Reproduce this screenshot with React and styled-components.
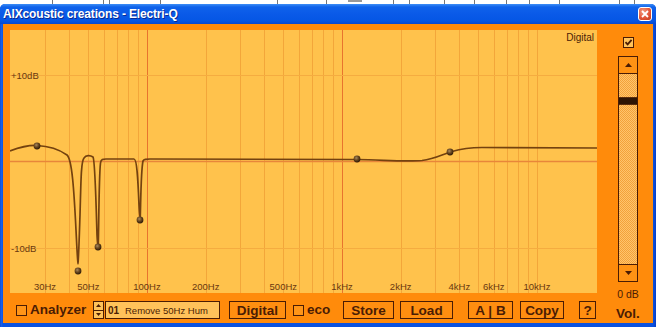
import React from 'react';
import styled, { createGlobalStyle } from 'styled-components';

const Global = createGlobalStyle`
  html, body { margin: 0; padding: 0; background: #fff; }
  body { font-family: "Liberation Sans", Arial, sans-serif; }
  * { box-sizing: border-box; }
`;

const INK = '#4a1c04';
const ORANGE = '#FF8B0B';

const Page = styled.div`
  width: 656px;
  height: 327px;
  overflow: hidden;
  background: #fff;
  display: flex;
  flex-direction: column;
`;

const BackStrip = styled.svg`
  display: block;
  width: 656px;
  height: 4px;
  flex: none;
`;

const Window = styled.div`
  flex: 1;
  display: flex;
  flex-direction: column;
  background: linear-gradient(90deg, #0840c8 0, #1a62ea 1px, #0a52e0 3px, #0a52e0 calc(100% - 3px), #0a3fc4 100%);
  border-radius: 5px 5px 0 0;
  overflow: hidden;
`;

const TitleBar = styled.div`
  height: 20px;
  flex: none;
  display: flex;
  align-items: center;
  justify-content: space-between;
  padding: 0 4px 0 3px;
  background: linear-gradient(180deg, #3d8ef6 0%, #0f62ea 15%, #0a5ae8 50%, #0556e4 85%, #0a48cf 100%);
`;

const Title = styled.span`
  color: #fff;
  font: bold 12px "Liberation Sans", Arial, sans-serif;
  letter-spacing: -0.15px;
  text-shadow: 1px 1px 0 #0a2a90;
`;

const CloseBtn = styled.div`
  width: 14px;
  height: 14px;
  border: 1px solid #fff;
  border-radius: 3px;
  background: radial-gradient(circle at 35% 30%, #f29a80 0%, #e2563a 55%, #c23818 100%);
  display: flex;
  align-items: center;
  justify-content: center;
`;

const Frame = styled.div`
  flex: 1;
  margin: 0 3px 4px 3px;
  background: ${ORANGE};
  display: grid;
  grid-template-columns: 587px 56px;
  padding-left: 7px;
`;

const MainCol = styled.div`
  display: flex;
  flex-direction: column;
  padding-top: 6px;
`;

const Graph = styled.svg`
  display: block;
  width: 587px;
  height: 263px;
  background: #FFC24C;
`;

const Toolbar = styled.div`
  margin-top: 8px;
  height: 18px;
  display: flex;
  align-items: center;
`;

const Box = styled.span`
  width: 11px;
  height: 11px;
  flex: none;
  border: 1px solid ${INK};
  background: ${p => (p.$checked ? '#FFC25A' : '#FF9518')};
  margin-left: ${p => p.$ml || 0}px;
  display: flex;
  align-items: center;
  justify-content: center;
`;

const ToolLabel = styled.span`
  font: bold 13.5px "Liberation Sans", Arial, sans-serif;
  color: ${INK};
  width: ${p => p.$w}px;
  margin-left: ${p => p.$ml || 0}px;
  white-space: nowrap;
  line-height: 18px;
`;

const Spinner = styled.div`
  width: 11px;
  height: 18px;
  margin-left: 8px;
  display: flex;
  flex-direction: column;
  border: 1px solid ${INK};
  background: #FFC25A;
`;

const SpinHalf = styled.div`
  flex: 1;
  display: flex;
  align-items: center;
  justify-content: center;
  border-top: ${p => (p.$bottom ? `1px solid ${INK}` : 'none')};
`;

const Preset = styled.div`
  width: 115px;
  height: 18px;
  margin-left: 1px;
  border: 1px solid ${INK};
  background: #FFC25A;
  display: flex;
  align-items: center;
  padding-left: 2px;
  color: ${INK};
  white-space: nowrap;
`;

const PresetNum = styled.span`
  font: bold 10px "Liberation Sans", Arial, sans-serif;
  width: 17px;
`;

const PresetName = styled.span`
  font: 9.5px "Liberation Sans", Arial, sans-serif;
`;

const Btn = styled.div`
  width: ${p => p.$w}px;
  height: 18px;
  margin-left: ${p => p.$ml || 0}px;
  border: 1px solid ${INK};
  background: #FF8E10;
  color: ${INK};
  font: bold 13.5px "Liberation Sans", Arial, sans-serif;
  display: flex;
  align-items: center;
  justify-content: center;
  white-space: nowrap;
  flex: none;
`;

const SideCol = styled.div`
  display: flex;
  flex-direction: column;
  align-items: center;
  padding-left: 6px;
  padding-top: 13px;
`;

const Slider = styled.div`
  margin-top: 8px;
  width: 20px;
  height: 226px;
  border: 1px solid ${INK};
  display: flex;
  flex-direction: column;
`;

const SlideBtn = styled.div`
  height: 17px;
  flex: none;
  background: #FF9314;
  display: flex;
  align-items: center;
  justify-content: center;
  border-bottom: ${p => (p.$top ? `1px solid ${INK}` : 'none')};
  border-top: ${p => (p.$top ? 'none' : `1px solid ${INK}`)};
`;

const Track = styled.div`
  flex: 1;
  background-color: #FFC46C;
  background-image: repeating-conic-gradient(#F3A23A 0% 25%, transparent 0% 50%);
  background-size: 2px 2px;
  display: flex;
  flex-direction: column;
`;

const Thumb = styled.div`
  margin-top: 23px;
  height: 8px;
  background: #2e1404;
  border-top: 1px solid #5a2c0c;
  border-bottom: 1px solid #5a2c0c;
`;

const DbText = styled.div`
  margin-top: 6px;
  font: 10.5px "Liberation Sans", Arial, sans-serif;
  color: ${INK};
  line-height: 12px;
`;

const VolText = styled.div`
  margin-top: 6px;
  font: bold 13.5px "Liberation Sans", Arial, sans-serif;
  color: ${INK};
  line-height: 15px;
`;

const Tri = ({ down, w = 7, h = 4, color = INK }) => (
  <svg width={w} height={h} viewBox={`0 0 ${w} ${h}`}>
    <polygon
      points={down ? `0,0 ${w},0 ${w / 2},${h}` : `0,${h} ${w},${h} ${w / 2},0`}
      fill={color}
    />
  </svg>
);

const CheckMark = () => (
  <svg width="9" height="9" viewBox="0 0 9 9">
    <path d="M1.5 4.2 L3.6 6.4 L7.6 1.8" fill="none" stroke={INK} strokeWidth="1.8" />
  </svg>
);

const xf = f => 147 + 195 * Math.log10(f / 100);

const gridFreqs = [];
[10, 100, 1000, 10000].forEach(d => {
  for (let m = 1; m <= 9; m++) {
    const f = d * m;
    if (f > 20 && f < 20000) gridFreqs.push(f);
  }
});

const labels = [
  [30, '30Hz'], [50, '50Hz'], [100, '100Hz'], [200, '200Hz'], [500, '500Hz'],
  [1000, '1kHz'], [2000, '2kHz'], [4000, '4kHz'], [6000, '6kHz'], [10000, '10kHz'],
];

const curve =
  'M10,151 C18,148 28,145 37,145.5 C48,146 60,150 67,155 C72,159 74,190 76,230 ' +
  'C77,250 77.5,262 78,263 C78.5,262 79,245 80,215 C81,180 81,162 84,158 ' +
  'C86,155 90,155 93,157 C95,160 96,200 97,235 C97.5,245 98,246 98.3,244 ' +
  'C98.8,225 99,175 100.5,163 C101,159 103,159 106,159 L134,159 ' +
  'C137,159 138,180 139,205 C139.5,215 140,218 140.3,216 C140.8,200 141,170 143,161 ' +
  'C144,159 146,159 150,159 L357,159.5 C385,160 405,162 422,160.5 ' +
  'C435,159 443,154 452,151.5 C462,148.5 470,147.5 482,147.5 L597,148';

const dots = [[37, 146], [78, 271], [98, 247], [140, 220], [357, 159], [450, 152]];

const backMarks = [52, 103, 109, 160, 277, 326, 393, 409, 444, 474, 506, 529, 559, 619, 634];

export default function App() {
  return (
    <Page>
      <Global />
      <BackStrip viewBox="0 0 656 4">
        {backMarks.map(x => (
          <rect key={x} x={x} y="0" width="1" height="4" fill="#777" />
        ))}
        <rect x="348" y="0" width="14" height="2" fill="#999" />
      </BackStrip>
      <Window>
        <TitleBar>
          <Title>AIXcoustic creations - Electri-Q</Title>
          <CloseBtn>
            <svg width="8" height="8" viewBox="0 0 8 8">
              <path d="M1 1 L7 7 M7 1 L1 7" stroke="#fff" strokeWidth="1.8" />
            </svg>
          </CloseBtn>
        </TitleBar>
        <Frame>
          <MainCol>
            <Graph viewBox="10 30 587 263">
              <defs>
                <radialGradient id="ball" cx="40%" cy="35%" r="65%">
                  <stop offset="0%" stopColor="#a88a60" />
                  <stop offset="50%" stopColor="#6a4820" />
                  <stop offset="100%" stopColor="#2e1a06" />
                </radialGradient>
              </defs>
              {gridFreqs.map(f => {
                const major = f === 100 || f === 1000;
                const x = Math.round(xf(f)) + 0.5;
                return (
                  <line key={f} x1={x} x2={x} y1="30" y2="293"
                    stroke={major ? '#E8742E' : '#F3A63A'} strokeWidth="1" />
                );
              })}
              <line x1="10" x2="597" y1="75.5" y2="75.5" stroke="#F5AC40" />
              <line x1="10" x2="597" y1="248.5" y2="248.5" stroke="#F5AC40" />
              <line x1="10" x2="597" y1="161.5" y2="161.5" stroke="#E8863A" strokeWidth="1.3" />
              <g fontFamily="Liberation Sans, Arial, sans-serif" fontSize="9.5" fill="#6a3810">
                <text x="11" y="79">+10dB</text>
                <text x="11" y="252">-10dB</text>
                {labels.map(([f, t]) => (
                  <text key={t} x={xf(f)} y="290" textAnchor="middle">{t}</text>
                ))}
                <text x="594" y="41" textAnchor="end" fontSize="10" fill="#4a2208">Digital</text>
              </g>
              <path d={curve} fill="none" stroke="#74420f" strokeWidth="1.7" />
              {dots.map(([x, y]) => (
                <circle key={x} cx={x} cy={y} r="3.4" fill="url(#ball)" />
              ))}
            </Graph>
            <Toolbar>
              <Box $ml={6} />
              <ToolLabel $ml={3} $w={55}>Analyzer</ToolLabel>
              <Spinner>
                <SpinHalf><Tri w={5} h={3} /></SpinHalf>
                <SpinHalf $bottom><Tri down w={5} h={3} /></SpinHalf>
              </Spinner>
              <Preset>
                <PresetNum>01</PresetNum>
                <PresetName>Remove 50Hz Hum</PresetName>
              </Preset>
              <Btn $w={57} $ml={9}>Digital</Btn>
              <Box $ml={7} />
              <ToolLabel $ml={3} $w={23}>eco</ToolLabel>
              <Btn $w={51} $ml={13}>Store</Btn>
              <Btn $w={53} $ml={6}>Load</Btn>
              <Btn $w={45} $ml={15}>A | B</Btn>
              <Btn $w={44} $ml={7}>Copy</Btn>
              <Btn $w={17} $ml={15}>?</Btn>
            </Toolbar>
          </MainCol>
          <SideCol>
            <Box $checked><CheckMark /></Box>
            <Slider>
              <SlideBtn $top><Tri /></SlideBtn>
              <Track><Thumb /></Track>
              <SlideBtn><Tri down /></SlideBtn>
            </Slider>
            <DbText>0 dB</DbText>
            <VolText>Vol.</VolText>
          </SideCol>
        </Frame>
      </Window>
    </Page>
  );
}
